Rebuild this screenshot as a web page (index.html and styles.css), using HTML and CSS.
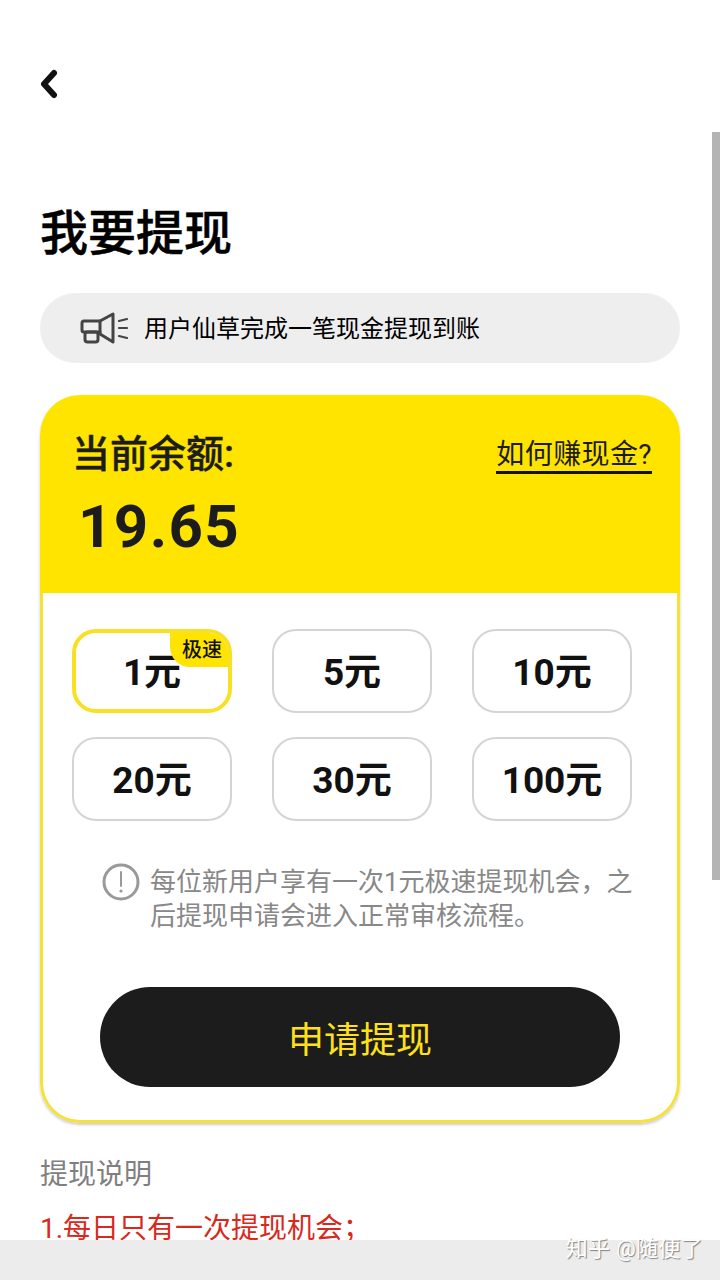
FILE: index.html
```html
<!DOCTYPE html>
<html lang="zh-CN">
<head>
    <meta charset="UTF-8">
    <meta name="viewport" content="width=device-width, initial-scale=1.0">
    <title>我要提现</title>
    <link rel="stylesheet" href="styles.css">
</head>
<body>
    <div class="page">
        <div class="topbar">
            <svg class="back-icon" width="18" height="30" viewBox="0 0 18 30">
                <path d="M14 4 L4 15 L14 26" fill="none" stroke="#111" stroke-width="6" stroke-linecap="round" stroke-linejoin="round"/>
            </svg>
        </div>
        <h1 class="title">我要提现</h1>
        <div class="notice">
            <svg class="notice-icon" width="48" height="32" viewBox="0 0 48 32">
                <g fill="none" stroke="#444" stroke-width="3" stroke-linejoin="round" stroke-linecap="round">
                    <path d="M20 9 L33 2 V30 L20 22 Z"/>
                    <path d="M20 9 H4 Q2 9 2 11 V18 Q2 20 4 20 H20"/>
                    <rect x="5" y="20" width="13" height="10" rx="2.5"/>
                    <path d="M39 9 L47 7 M39 16 H47 M39 24 L47 26" stroke-width="2.2"/>
                </g>
            </svg>
            <span class="notice-text">用户仙草完成一笔现金提现到账</span>
        </div>

        <div class="card">
            <div class="card-head">
                <div class="balance-row">
                    <span class="balance-label">当前余额:</span>
                    <a class="earn-link">如何赚现金?</a>
                </div>
                <div class="balance">19.65</div>
            </div>
            <div class="card-body">
                <div class="amounts">
                    <div class="amount active">1元<span class="badge">极速</span></div>
                    <div class="amount">5元</div>
                    <div class="amount">10元</div>
                    <div class="amount">20元</div>
                    <div class="amount">30元</div>
                    <div class="amount">100元</div>
                </div>
                <div class="tip">
                    <svg class="tip-icon" width="38" height="38" viewBox="0 0 38 38">
                        <circle cx="19" cy="19" r="17" fill="none" stroke="#999" stroke-width="3"/>
                        <path d="M19 9 V23" stroke="#999" stroke-width="2" stroke-linecap="round"/>
                        <circle cx="19" cy="28" r="1.6" fill="#999"/>
                    </svg>
                    <p>每位新用户享有一次1元极速提现机会，之后提现申请会进入正常审核流程。</p>
                </div>
                <button class="submit">申请提现</button>
            </div>
        </div>

        <div class="rules">
            <p class="rules-title">提现说明</p>
            <p class="rules-first">1.每日只有一次提现机会；</p>
        </div>

        <div class="scrollbar"></div>
        <div class="bottom-bar"></div>
        <div class="watermark">知乎 @随便了</div>
    </div>
</body>
</html>
```
FILE: styles.css
```css
* {
    box-sizing: border-box;
}

body {
    margin: 0;
    background: #fff;
    font-family: Roboto, "Noto Sans CJK SC", sans-serif;
    color: #1c1c1c;
}

p {
    margin: 0;
}

.page {
    position: relative;
    width: 720px;
    height: 1280px;
    padding: 0 40px;
    overflow: hidden;
}

.topbar {
    height: 132px;
    padding-top: 69px;
}

.back-icon {
    display: block;
}

.title {
    margin: 68px 0 0;
    font-size: 48px;
    line-height: 68px;
    font-weight: 500;
    color: #000;
    -webkit-text-stroke: 0.5px #000;
}

.notice {
    display: flex;
    align-items: center;
    height: 70px;
    margin-top: 25px;
    padding-left: 40px;
    border-radius: 35px;
    background: #eee;
    font-size: 24px;
    color: #000;
}

.notice-icon {
    margin-right: 16px;
}

.notice-text {
    padding-bottom: 4px;
}

.card {
    margin-top: 32px;
    height: 728px;
    border-radius: 40px;
    box-shadow: 0 2px 3px rgba(0, 0, 0, 0.2);
}

.card-head {
    height: 198px;
    padding: 35px 28px 0 32px;
    border-radius: 40px 40px 0 0;
    background: #ffe400;
}

.balance-row {
    display: flex;
    justify-content: space-between;
    align-items: flex-start;
}

.balance-label {
    font-size: 38px;
    line-height: 48px;
    font-weight: 500;
    -webkit-text-stroke: 0.4px #1c1c1c;
}

.earn-link {
    height: 39px;
    margin-top: 5px;
    font-size: 28px;
    line-height: 40px;
    letter-spacing: 0.4px;
    border-bottom: 3px solid #111;
}

.balance {
    margin: 14px 0 0 6px;
    font-size: 60px;
    line-height: 70px;
    font-weight: 700;
    letter-spacing: 1.4px;
}

.card-body {
    height: 530px;
    padding: 36px 0 0 29px;
    border: 3px solid #f6e136;
    border-top: none;
    border-radius: 0 0 40px 40px;
    background: #fff;
}

.amounts {
    display: grid;
    grid-template-columns: repeat(3, 160px);
    gap: 24px 40px;
}

.amount {
    position: relative;
    display: flex;
    justify-content: center;
    align-items: center;
    height: 84px;
    padding-bottom: 4px;
    border: 2px solid #d4d4d4;
    border-radius: 24px;
    font-size: 37px;
    font-weight: 700;
    color: #111;
    overflow: hidden;
}

.amount.active {
    border: 4px solid #f8e024;
}

.badge {
    position: absolute;
    top: 0;
    right: 0;
    width: 58px;
    height: 34px;
    padding-left: 6px;
    border-bottom-left-radius: 20px;
    background: #ffe400;
    font-size: 20px;
    line-height: 34px;
    font-weight: 500;
    text-align: center;
}

.tip {
    display: flex;
    width: 532px;
    margin: 42px 0 0 30px;
    color: #888;
    font-size: 26px;
    line-height: 34px;
}

.tip-icon {
    flex: none;
    margin-right: 10px;
}

.tip p {
    padding-top: 2px;
    width: 486px;
}

.submit {
    display: block;
    width: 520px;
    height: 100px;
    margin: 54px 0 0 28px;
    border: none;
    border-radius: 50px;
    background: #1c1c1c;
    color: #ffe11a;
    font-family: inherit;
    font-size: 36px;
}

.rules {
    margin-top: 32px;
    font-size: 28px;
}

.rules-title {
    line-height: 40px;
    color: #808080;
}

.rules-first {
    margin-top: 14px;
    line-height: 40px;
    color: #d9281c;
}

.scrollbar {
    position: absolute;
    top: 132px;
    right: 0;
    width: 8px;
    height: 748px;
    background: #b4b4b4;
}

.bottom-bar {
    position: absolute;
    left: 0;
    right: 0;
    bottom: 0;
    height: 40px;
    background: #ececec;
}

.watermark {
    position: absolute;
    top: 1234px;
    right: 17px;
    font-size: 22px;
    line-height: 30px;
    letter-spacing: 0.3px;
    color: #fff;
    text-shadow: 1px 1px 1px rgba(0, 0, 0, 0.45);
}
```
